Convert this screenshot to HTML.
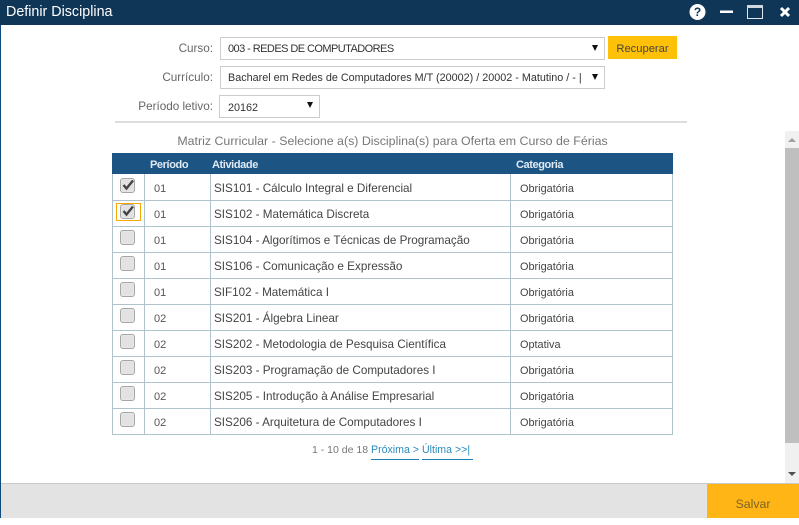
<!DOCTYPE html>
<html><head><meta charset="utf-8">
<style>
html,body{margin:0;padding:0;background:#fff}
body{width:799px;height:518px;position:relative;overflow:hidden;font-family:"Liberation Sans",sans-serif;font-size:12px;color:#333}
.a{position:absolute;white-space:nowrap}
.lb{color:#666;text-align:right;width:120px;left:93px;font-size:11.7px;margin-top:1px}
.sel{border:1px solid #ccc;box-sizing:border-box;height:23px;line-height:23px;padding-left:7px;font-size:10.8px;color:#333;background:#fff}
.arr{position:absolute;width:0;height:0;border-left:3.5px solid transparent;border-right:3.5px solid transparent;border-top:6px solid #111}
.line{position:absolute;background:#aec3ca}
.cb{position:absolute;left:120px;width:15px;height:15px;box-sizing:border-box;border:1px solid #a6a6a6;border-radius:3px;background:#e2e2e2;box-shadow:inset 0 0 1px #fff}
.t{position:absolute;white-space:nowrap;line-height:16px}
.p{left:154px;font-size:11px;color:#555;margin-top:1px}
.d{left:214px;font-size:11.7px;color:#444;margin-top:1px}
.c{left:520px;font-size:10.9px;color:#444;margin-top:1px}
.h{color:#dfeaf3;font-size:11px;font-weight:bold;letter-spacing:-.4px;top:157px}
</style></head><body>
<div class="a" style="left:0;top:0;width:799px;height:25px;background:#0f3557"></div>
<div class="a" style="left:0;top:25px;width:1px;height:493px;background:#0f4a7a"></div>
<div class="a" style="left:6px;top:3px;color:#fff;font-size:14.3px;line-height:18px">Definir Disciplina</div>
<svg class="a" style="left:685px;top:0" width="114" height="25" viewBox="0 0 114 25">
<circle cx="12.500" cy="12" r="8" fill="#fff"/>
<text x="12.500" y="16" font-family="Liberation Sans" font-size="12" font-weight="bold" fill="#0f3557" text-anchor="middle">?</text>
<rect x="35" y="10.500" width="13" height="2.500" fill="#fff"/>
<rect x="62.500" y="5.500" width="15" height="13" fill="none" stroke="#dfe6ec"/>
<rect x="62" y="5" width="16" height="3" fill="#cfd8e0"/>
<path d="M96 8L104 16M104 8L96 16" stroke="#fff" stroke-width="3"/>
</svg>

<div class="a lb" style="top:41px">Curso:</div>
<div class="a lb" style="top:70px">Currículo:</div>
<div class="a lb" style="top:99px">Período letivo:</div>

<div class="a sel" style="left:220px;top:37px;width:385px;font-size:11px;letter-spacing:-.56px">003 - REDES DE COMPUTADORES</div>
<div class="arr" style="left:592px;top:45px"></div>
<div class="a sel" style="left:220px;top:66px;width:385px">Bacharel em Redes de Computadores M/T (20002) / 20002 - Matutino / - |</div>
<div class="arr" style="left:592px;top:74px"></div>
<div class="a sel" style="left:219px;top:95px;width:101px;padding-left:8px;line-height:24px">20162</div>
<div class="arr" style="left:307px;top:102px"></div>
<div class="a" style="left:608px;top:36px;width:69px;height:23px;background:#ffc107;color:#444;text-align:center;line-height:26px;font-size:11.2px">Recuperar</div>
<div class="a" style="left:115px;top:121px;width:572px;height:2px;background:#ddd"></div>

<div class="a" style="left:112px;width:561px;top:133px;text-align:center;color:#777;font-size:12.4px;line-height:16px">Matriz Curricular - Selecione a(s) Disciplina(s) para Oferta em Curso de Férias</div>

<div class="a" style="left:112px;top:153px;width:561px;height:21px;background:#1c5484"></div>
<div class="t h" style="left:150px">Período</div>
<div class="t h" style="left:212px">Atividade</div>
<div class="t h" style="left:516px">Categoria</div>

<div class="line" style="left:112px;top:174px;width:1px;height:261px"></div>
<div class="line" style="left:144px;top:174px;width:1px;height:261px"></div>
<div class="line" style="left:210px;top:174px;width:1px;height:261px"></div>
<div class="line" style="left:510px;top:174px;width:1px;height:261px"></div>
<div class="line" style="left:672px;top:174px;width:1px;height:261px"></div>
<div class="line" style="left:112px;top:200px;width:561px;height:1px"></div>
<div class="line" style="left:112px;top:226px;width:561px;height:1px"></div>
<div class="line" style="left:112px;top:252px;width:561px;height:1px"></div>
<div class="line" style="left:112px;top:278px;width:561px;height:1px"></div>
<div class="line" style="left:112px;top:304px;width:561px;height:1px"></div>
<div class="line" style="left:112px;top:330px;width:561px;height:1px"></div>
<div class="line" style="left:112px;top:356px;width:561px;height:1px"></div>
<div class="line" style="left:112px;top:382px;width:561px;height:1px"></div>
<div class="line" style="left:112px;top:408px;width:561px;height:1px"></div>
<div class="line" style="left:112px;top:434px;width:561px;height:1px"></div>

<div class="a" style="left:116px;top:203px;width:23px;height:16px;border:1px solid #f5a800"></div>
<div class="cb" style="top:178px"></div>
<div class="cb" style="top:204px"></div>
<div class="cb" style="top:230px"></div>
<div class="cb" style="top:256px"></div>
<div class="cb" style="top:282px"></div>
<div class="cb" style="top:308px"></div>
<div class="cb" style="top:334px"></div>
<div class="cb" style="top:360px"></div>
<div class="cb" style="top:386px"></div>
<div class="cb" style="top:412px"></div>
<svg class="a" style="left:120px;top:178px" width="16" height="42" viewBox="0 0 16 42">
<path d="M3.500 7L6.500 10.500L13 2.500" fill="none" stroke="#444" stroke-width="2.400"/>
<path d="M3.500 33L6.500 36.500L13 28.500" fill="none" stroke="#444" stroke-width="2.400"/>
</svg>

<div class="t p" style="top:180px">01</div><div class="t d" style="top:180px">SIS101 - Cálculo Integral e Diferencial</div><div class="t c" style="top:180px">Obrigatória</div>
<div class="t p" style="top:206px">01</div><div class="t d" style="top:206px">SIS102 - Matemática Discreta</div><div class="t c" style="top:206px">Obrigatória</div>
<div class="t p" style="top:232px">01</div><div class="t d" style="top:232px">SIS104 - Algorítimos e Técnicas de Programação</div><div class="t c" style="top:232px">Obrigatória</div>
<div class="t p" style="top:258px">01</div><div class="t d" style="top:258px">SIS106 - Comunicação e Expressão</div><div class="t c" style="top:258px">Obrigatória</div>
<div class="t p" style="top:284px">01</div><div class="t d" style="top:284px">SIF102 - Matemática I</div><div class="t c" style="top:284px">Obrigatória</div>
<div class="t p" style="top:310px">02</div><div class="t d" style="top:310px">SIS201 - Álgebra Linear</div><div class="t c" style="top:310px">Obrigatória</div>
<div class="t p" style="top:336px">02</div><div class="t d" style="top:336px">SIS202 - Metodologia de Pesquisa Científica</div><div class="t c" style="top:336px">Optativa</div>
<div class="t p" style="top:362px">02</div><div class="t d" style="top:362px">SIS203 - Programação de Computadores I</div><div class="t c" style="top:362px">Obrigatória</div>
<div class="t p" style="top:388px">02</div><div class="t d" style="top:388px">SIS205 - Introdução à Análise Empresarial</div><div class="t c" style="top:388px">Obrigatória</div>
<div class="t p" style="top:414px">02</div><div class="t d" style="top:414px">SIS206 - Arquitetura de Computadores I</div><div class="t c" style="top:414px">Obrigatória</div>

<div class="t" style="left:312px;top:442px;color:#777;font-size:10.5px">1 - 10 de 18</div>
<div class="t" style="left:371px;top:442px;width:48px;height:17px;border-bottom:1px solid #1a7fb0;color:#2a8bbd;font-size:10.6px">Próxima &gt;</div>
<div class="t" style="left:422px;top:442px;width:51px;height:17px;border-bottom:1px solid #1a7fb0;color:#2a8bbd;font-size:10.6px">Última &gt;&gt;|</div>

<div class="a" style="left:785px;top:131px;width:14px;height:352px;background:#f0f0f0"></div>
<div class="a" style="left:785px;top:148px;width:14px;height:295px;background:#bfbfbf"></div>
<div class="a" style="left:788px;top:138px;width:0;height:0;border-left:4px solid transparent;border-right:4px solid transparent;border-bottom:4px solid #a0a0a0"></div>
<div class="a" style="left:788px;top:472px;width:0;height:0;border-left:4px solid transparent;border-right:4px solid transparent;border-top:4px solid #505050"></div>

<div class="a" style="left:1px;top:483px;width:798px;height:35px;background:#e3e3e3;border-top:1px solid #c8c8c8;box-sizing:border-box"></div>
<div class="a" style="left:707px;top:484px;width:92px;height:34px;background:#ffb515;color:#7a6326;text-align:center;line-height:41px;font-size:12.3px">Salvar</div>
</body></html>
